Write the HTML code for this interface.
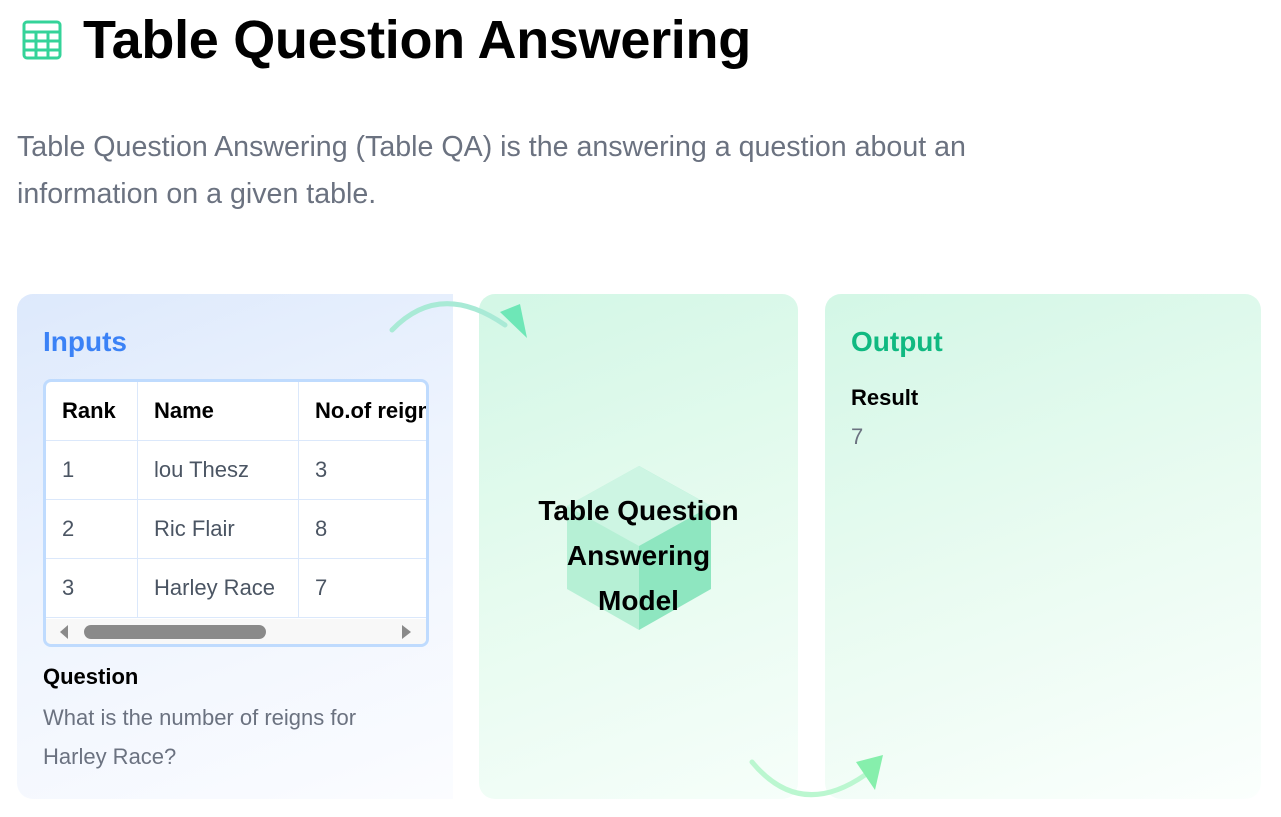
<!DOCTYPE html>
<html><head><meta charset="utf-8"><style>
body{margin:0;width:1281px;height:817px;background:#fff;font-family:"Liberation Sans",sans-serif;position:relative;overflow:hidden}
.abs{position:absolute}
h1{position:absolute;left:83px;top:9px;margin:0;font-size:54px;font-weight:bold;color:#000;letter-spacing:-0.3px}
.desc{left:17px;top:124px;font-size:28.6px;line-height:47px;color:#6b7280;width:1000px}
.p1{left:17px;top:294px;width:436px;height:505px;border-radius:16px 0 0 16px;background:linear-gradient(160deg,#dde9fc 0%,#eef4fe 45%,#fbfcff 100%)}
.p2{left:479px;top:294px;width:319px;height:505px;border-radius:16px;background:linear-gradient(160deg,#d3f7e6 0%,#e6fbef 50%,#f6fefa 100%)}
.p3{left:825px;top:294px;width:436px;height:505px;border-radius:16px;background:linear-gradient(160deg,#d3f7e6 0%,#e9fbf1 50%,#fbfffd 100%)}
.lbl{font-size:28px;font-weight:bold}
table{border-collapse:collapse;font-size:22px;color:#4b5563;table-layout:fixed;width:500px}
td,th{border:1px solid #dbe8fb;height:58px;padding:0 0 0 16px;text-align:left;white-space:nowrap;overflow:hidden}
th{color:#000;font-weight:bold}
</style></head><body>
<svg class="abs" style="left:22px;top:20px" width="40" height="40" viewBox="0 0 40 40"><rect x="2" y="2" width="36" height="36" rx="3" fill="none" stroke="#34d399" stroke-width="3"/><path d="M2 12H38M2 21H38M2 30H38M14 12V38M26 12V38" stroke="#34d399" stroke-width="3"/></svg>
<h1>Table Question Answering</h1>
<div class="abs desc">Table Question Answering (Table QA) is the answering a question about an information on a given table.</div>
<div class="abs p1"></div><div class="abs p2"></div><div class="abs p3"></div>
<div class="abs lbl" style="left:43px;top:326px;color:#3b82f6">Inputs</div>
<div class="abs" style="left:43px;top:379px;width:380px;height:262px;border:3px solid #bfdbfe;border-radius:8px;background:#fff;overflow:hidden">
<table style="margin:-1px 0 0 -1px"><colgroup><col style="width:92px"><col style="width:161px"><col style="width:247px"></colgroup><tr><th>Rank</th><th>Name</th><th>No.of reigns</th></tr>
<tr><td>1</td><td>lou Thesz</td><td>3</td></tr><tr><td>2</td><td>Ric Flair</td><td>8</td></tr><tr><td>3</td><td>Harley Race</td><td>7</td></tr></table>
<div class="abs" style="left:0;top:237px;width:380px;height:25px;background:#f8f8f8"></div>
<div class="abs" style="left:38px;top:243px;width:182px;height:14px;border-radius:7px;background:#8a8a8a"></div>
<div class="abs" style="left:14px;top:243px;width:0;height:0;border:7px solid transparent;border-right:8px solid #8a8a8a;border-left:0"></div>
<div class="abs" style="left:356px;top:243px;width:0;height:0;border:7px solid transparent;border-left:9px solid #8a8a8a;border-right:0"></div>
</div>
<div class="abs" style="left:43px;top:664px;font-size:22px;font-weight:bold">Question</div>
<div class="abs" style="left:43px;top:698px;font-size:22px;line-height:39px;color:#6b7280;width:380px">What is the number of reigns for Harley Race?</div>
<svg class="abs" style="left:380px;top:290px" width="160" height="60"><path d="M12 40 Q60 -10 125 35" fill="none" stroke="#a9ead6" stroke-width="5" stroke-linecap="round"/><path d="M120 22 L147 48 L140 14Z" fill="#6ee7b7"/></svg>
<svg class="abs" style="left:565px;top:464px" width="148" height="168" viewBox="0 0 148 168"><path d="M74 2 L146 42 L146 125 L74 166 Z" fill="#8ee6c0"/><path d="M74 2 L2 42 L2 125 L74 166Z" fill="#b6f0d5"/><path d="M74 2 L146 42 L74 82 L2 42Z" fill="#cdf5e3"/></svg>
<div class="abs" style="left:479px;top:488px;width:319px;text-align:center;font-size:28px;font-weight:bold;line-height:45px">Table Question<br>Answering<br>Model</div>
<svg class="abs" style="left:740px;top:740px" width="160" height="70"><path d="M12 22 Q60 80 125 35" fill="none" stroke="#bbf7d0" stroke-width="5" stroke-linecap="round"/><path d="M116 22 L143 15 L135 50Z" fill="#86efac"/></svg>
<div class="abs lbl" style="left:851px;top:326px;color:#10b981">Output</div>
<div class="abs" style="left:851px;top:385px;font-size:22px;font-weight:bold">Result</div>
<div class="abs" style="left:851px;top:424px;font-size:22px;color:#6b7280">7</div>
</body></html>
